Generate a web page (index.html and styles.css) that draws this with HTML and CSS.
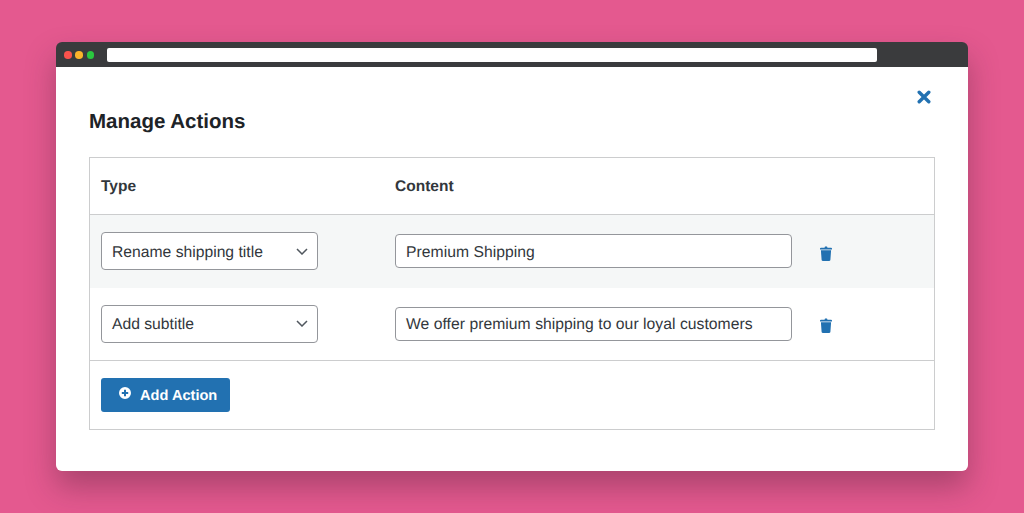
FILE: index.html
```html
<!DOCTYPE html>
<html lang="en">
<head>
<meta charset="utf-8">
<title>Manage Actions</title>
<link rel="stylesheet" href="styles.css">
</head>
<body>
<div class="window">
  <div class="bar">
    <div class="dots"><span class="dot red"></span><span class="dot yellow"></span><span class="dot green"></span></div>
    <div class="url"></div>
  </div>
  <div class="modal">
    <div class="close-row">
      <svg class="close" viewBox="0 0 14 14"><path d="M2.200 2.200 11.800 11.800M11.800 2.200 2.200 11.800" fill="none" stroke="#2271b1" stroke-width="3.400" stroke-linecap="round"/></svg>
    </div>
    <h1>Manage Actions</h1>
    <div class="table">
      <div class="row head"><div class="col-type">Type</div><div class="col-content">Content</div></div>
      <div class="row action shaded">
        <div class="col-type"><div class="select"><span>Rename shipping title</span><svg class="chev" viewBox="0 0 12 7"><path d="M1 1 6 6 11 1" fill="none" stroke="#50575e" stroke-width="1.500"/></svg></div></div>
        <div class="col-content"><div class="input">Premium Shipping</div></div>
        <svg class="trash" viewBox="0 0 12 15"><path d="M4.500 1.800 5 .5h2l.5 1.300H11c.6 0 1 .3 1 .8v.8H0v-.8c0-.5.4-.8 1-.8zM.9 4.300h10.200l-.7 9.500c0 .7-.5 1.200-1.100 1.200H2.700c-.6 0-1.100-.5-1.100-1.200z" fill="#2271b1"/></svg>
      </div>
      <div class="row action">
        <div class="col-type"><div class="select"><span>Add subtitle</span><svg class="chev" viewBox="0 0 12 7"><path d="M1 1 6 6 11 1" fill="none" stroke="#50575e" stroke-width="1.500"/></svg></div></div>
        <div class="col-content"><div class="input">We offer premium shipping to our loyal customers</div></div>
        <svg class="trash" viewBox="0 0 12 15"><path d="M4.500 1.800 5 .5h2l.5 1.300H11c.6 0 1 .3 1 .8v.8H0v-.8c0-.5.4-.8 1-.8zM.9 4.300h10.200l-.7 9.500c0 .7-.5 1.200-1.100 1.200H2.700c-.6 0-1.100-.5-1.100-1.200z" fill="#2271b1"/></svg>
      </div>
      <div class="foot">
        <div class="button">
          <svg class="plus" viewBox="0 0 12 12"><path fill-rule="evenodd" d="M6 0a6 6 0 1 1 0 12A6 6 0 0 1 6 0zM5 2.800V5H2.800v2H5v2.200h2V7h2.200V5H7V2.800z" fill="#fff"/></svg>
          <span class="button-label">Add Action</span>
        </div>
      </div>
    </div>
  </div>
</div>
</body>
</html>
```

FILE: styles.css
```css
* { box-sizing: border-box; }
html, body { margin: 0; height: 100%; }
body {
  background: #e4598f;
  padding: 42px 56px;
  font-family: "Liberation Sans", Arial, sans-serif;
  color: #32373c;
  overflow: hidden;
  text-rendering: geometricPrecision;
}
.window {
  width: 912px;
  height: 429px;
  border-radius: 6px;
  display: flex;
  flex-direction: column;
  box-shadow: 0 16px 30px rgba(70, 30, 50, .36);
}
.bar {
  height: 25px;
  background: #3a3b3d;
  border-radius: 6px 6px 0 0;
  display: flex;
  align-items: flex-start;
  padding: 6px 0 0 8px;
  flex: none;
}
.dots { display: flex; gap: 3.800px; width: 43px; padding-top: 3px; flex: none; }
.dot { width: 7.500px; height: 7.500px; border-radius: 50%; }
.red { background: #f9524c; }
.yellow { background: #fbb32a; }
.green { background: #2ac83f; }
.url { width: 770px; height: 14px; background: #fff; border-radius: 2px; }
.modal {
  flex: 1;
  background: #fff;
  border-radius: 0 0 6px 6px;
  padding: 0 33px;
  display: flex;
  flex-direction: column;
}
.close-row { display: flex; justify-content: flex-end; height: 0; }
.close { width: 14px; height: 14px; margin: 23px 4px 0 0; flex: none; }
h1 {
  margin: 42px 0 0;
  height: 26px;
  font-size: 20.500px;
  line-height: 26px;
  font-weight: 700;
  color: #1d2327;
}
.table {
  margin-top: 22px;
  width: 846px;
  height: 273px;
  border: 1px solid #cccdce;
  display: flex;
  flex-direction: column;
}
.row { display: flex; align-items: center; padding-left: 11px; }
.col-type { width: 294px; flex: none; }
.col-content { flex: none; width: 397px; }
.head {
  height: 57px;
  border-bottom: 1px solid #cccdce;
  font-size: 15.500px;
  font-weight: 700;
  padding-top: 2px;
}
.action { height: 72.500px; }
.shaded { background: #f5f7f7; }
.select {
  width: 217px;
  height: 38px;
  border: 1px solid #94969b;
  border-radius: 4px;
  background: #fff;
  display: flex;
  align-items: center;
  justify-content: space-between;
  padding: 0 9px 0 10px;
  font-size: 15.700px;
}
.select span { padding-top: 3px; }
.chev { width: 12px; height: 7px; }
.input {
  height: 34px;
  border: 1px solid #94969b;
  border-radius: 4px;
  background: #fff;
  padding: 1.500px 10px 0;
  font-size: 15.700px;
  line-height: 32px;
  letter-spacing: .04px;
  white-space: nowrap;
}
.trash { width: 12px; height: 15px; margin: 4px 0 0 28px; flex: none; }
.foot {
  flex: 1;
  border-top: 1px solid #cccdce;
  padding: 17px 11px 0;
}
.button {
  width: 129px;
  height: 34px;
  background: #2271b1;
  border-radius: 3px;
  color: #fff;
  font-size: 14.600px;
  font-weight: 700;
  display: flex;
  align-items: center;
  padding-left: 18px;
  gap: 9px;
}
.button-label { padding-top: 1px; }
.plus { width: 12px; height: 12px; margin-top: -5px; flex: none; }
```
